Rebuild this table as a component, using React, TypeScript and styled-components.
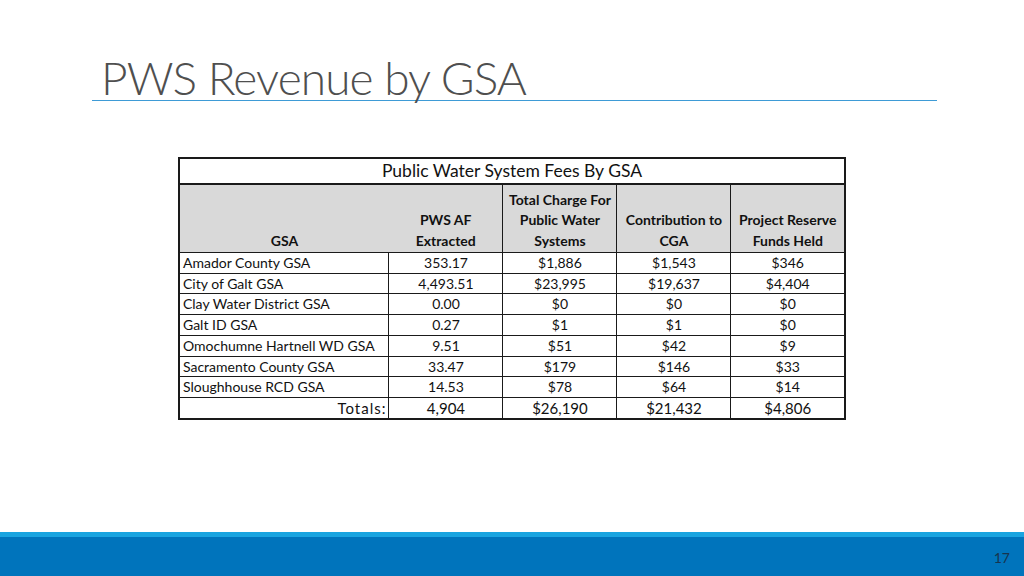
import React from "react";
import styled, { createGlobalStyle } from "styled-components";

const Global = createGlobalStyle`
  html, body { margin: 0; padding: 0; background: #ffffff; }
  body { font-family: Lato, "Open Sans", sans-serif; }
`;

const Slide = styled.div`
  width: 1024px;
  height: 576px;
  display: flex;
  flex-direction: column;
  overflow: hidden;
  background: #ffffff;
`;

const TitleBar = styled.div`
  margin: 50px 87px 0 92px;
  height: 50px;
  border-bottom: 1px solid #3e9bd6;
  padding-left: 9px;
`;

const Title = styled.h1`
  margin: 0;
  font-family: Lato, sans-serif;
  font-weight: 300;
  font-size: 46px;
  letter-spacing: -0.9px;
  line-height: 56px;
  color: #4f4f4f;
  white-space: nowrap;
`;

const Content = styled.div`
  flex: 1;
  display: flex;
  justify-content: center;
  padding-top: 56px;
`;

const Table = styled.table`
  width: 666px;
  height: 263px;
  border-collapse: collapse;
  table-layout: fixed;
  border: 2px solid #1a1a1a;
  font-family: Lato, sans-serif;
  color: #111;
`;

const CaptionCell = styled.th`
  height: 24px;
  padding: 0;
  font-weight: 400;
  font-size: 17.5px;
  line-height: 22px;
  text-align: center;
  vertical-align: middle;
  border-bottom: 2px solid #1a1a1a;
`;

const HeadCell = styled.th<{ $divider?: boolean }>`
  height: 66px;
  padding: 0 0 1px;
  background: #d9d9d9;
  font-weight: 700;
  font-size: 14px;
  line-height: 20.5px;
  text-align: center;
  vertical-align: bottom;
  white-space: nowrap;
  border-left: ${(p) => (p.$divider ? "1.5px solid #1a1a1a" : "none")};
  border-bottom: 1.5px solid #1a1a1a;
`;

const Cell = styled.td<{ $left?: boolean; $total?: boolean }>`
  height: 19px;
  padding: 0;
  padding-left: ${(p) => (p.$left ? "3px" : "0")};
  padding-right: ${(p) => (p.$total && p.$left ? "2px" : "0")};
  font-size: ${(p) => (p.$total ? "15px" : "14px")};
  line-height: 18px;
  letter-spacing: ${(p) => (p.$total && p.$left ? "1px" : "0")};
  text-align: ${(p) => (p.$left ? (p.$total ? "right" : "left") : "center")};
  vertical-align: middle;
  white-space: nowrap;
  border: 1.5px solid #1a1a1a;
`;

const Footer = styled.div`
  height: 44px;
  display: flex;
  flex-direction: column;
`;

const FooterStrip = styled.div`
  height: 5px;
  background: #19a4e0;
`;

const FooterBar = styled.div`
  flex: 1;
  background: #0074bc;
  display: flex;
  align-items: center;
  justify-content: flex-end;
  padding-right: 14px;
`;

const PageNum = styled.span`
  font-family: Lato, sans-serif;
  font-size: 14px;
  color: #17344f;
  padding-top: 2px;
`;

const rows: [string, string, string, string, string][] = [
  ["Amador County GSA", "353.17", "$1,886", "$1,543", "$346"],
  ["City of Galt GSA", "4,493.51", "$23,995", "$19,637", "$4,404"],
  ["Clay Water District GSA", "0.00", "$0", "$0", "$0"],
  ["Galt ID GSA", "0.27", "$1", "$1", "$0"],
  ["Omochumne Hartnell WD GSA", "9.51", "$51", "$42", "$9"],
  ["Sacramento County GSA", "33.47", "$179", "$146", "$33"],
  ["Sloughhouse RCD GSA", "14.53", "$78", "$64", "$14"],
];

export default function App() {
  return (
    <>
      <Global />
      <Slide>
        <TitleBar>
          <Title>PWS Revenue by GSA</Title>
        </TitleBar>
        <Content>
          <Table>
            <colgroup>
              <col style={{ width: 210 }} />
              <col style={{ width: 114 }} />
              <col style={{ width: 114 }} />
              <col style={{ width: 114 }} />
              <col style={{ width: 114 }} />
            </colgroup>
            <thead>
              <tr>
                <CaptionCell colSpan={5}>Public Water System Fees By GSA</CaptionCell>
              </tr>
              <tr>
                <HeadCell>GSA</HeadCell>
                <HeadCell>
                  PWS AF
                  <br />
                  Extracted
                </HeadCell>
                <HeadCell $divider>
                  Total Charge For
                  <br />
                  Public Water
                  <br />
                  Systems
                </HeadCell>
                <HeadCell $divider>
                  Contribution to
                  <br />
                  CGA
                </HeadCell>
                <HeadCell $divider>
                  Project Reserve
                  <br />
                  Funds Held
                </HeadCell>
              </tr>
            </thead>
            <tbody>
              {rows.map((r) => (
                <tr key={r[0]}>
                  <Cell $left>{r[0]}</Cell>
                  <Cell>{r[1]}</Cell>
                  <Cell>{r[2]}</Cell>
                  <Cell>{r[3]}</Cell>
                  <Cell>{r[4]}</Cell>
                </tr>
              ))}
              <tr>
                <Cell $left $total>
                  Totals:
                </Cell>
                <Cell $total>4,904</Cell>
                <Cell $total>$26,190</Cell>
                <Cell $total>$21,432</Cell>
                <Cell $total>$4,806</Cell>
              </tr>
            </tbody>
          </Table>
        </Content>
        <Footer>
          <FooterStrip />
          <FooterBar>
            <PageNum>17</PageNum>
          </FooterBar>
        </Footer>
      </Slide>
    </>
  );
}
